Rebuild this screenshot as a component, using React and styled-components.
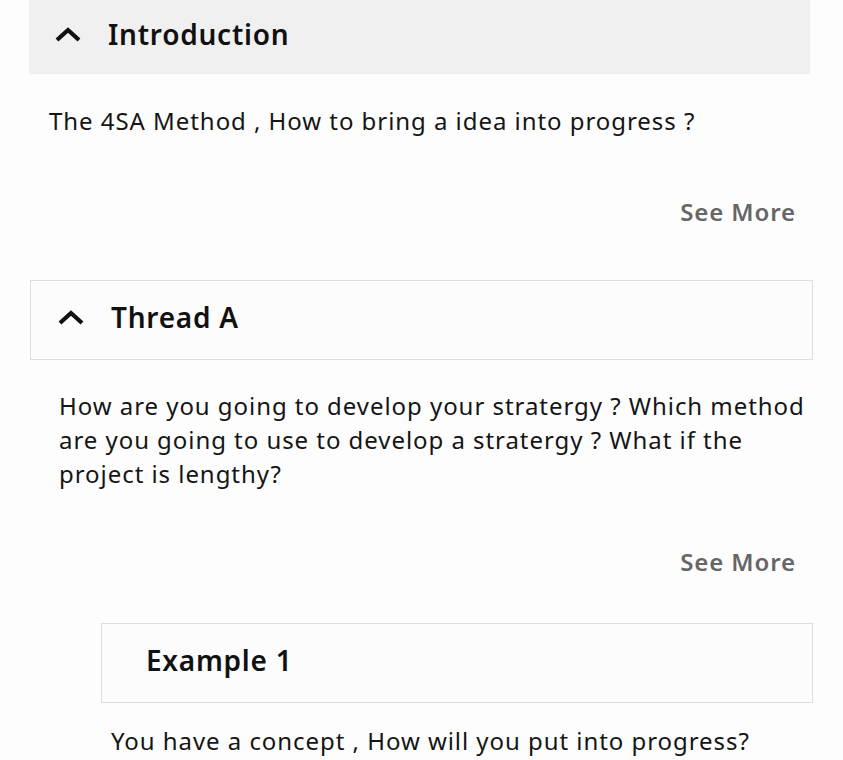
import styled, { createGlobalStyle } from "styled-components";

const GlobalStyle = createGlobalStyle`
  body {
    margin: 0;
    background: #fdfdfd;
    font-family: "Noto Sans", "Open Sans", sans-serif;
    color: #151515;
  }
`;

const Chevron = () => (
  <svg width="28" height="16" viewBox="0 0 28 16">
    <polyline points="3,14 14,4 25,14" fill="none" stroke="#111" strokeWidth="4.2" />
  </svg>
);

const App = () => {
  return (
    <>
      <GlobalStyle />
      <Page>
        <HeaderBar filled left="29px" right="33px">
          <Chevron />
          <HeaderText>Introduction</HeaderText>
        </HeaderBar>
        <Body left="49px" top="30px">
          The 4SA Method , How to bring a idea into progress ?
        </Body>
        <SeeMore top="57px">See More</SeeMore>

        <HeaderBar left="30px" right="30px" top="51px">
          <Chevron />
          <HeaderText>Thread A</HeaderText>
        </HeaderBar>
        <Body left="59px" top="29px">
          How are you going to develop your stratergy ? Which method are you going to use to
          develop a stratergy ? What if the project is lengthy?
        </Body>
        <SeeMore top="54px">See More</SeeMore>

        <HeaderBar left="101px" right="30px" top="44px" plain>
          <HeaderText>Example 1</HeaderText>
        </HeaderBar>
        <Body left="111px" top="21px">
          You have a concept , How will you put into progress?
        </Body>
      </Page>
    </>
  );
};

export default App;

const Page = styled.div`
  width: 843px;
  height: 760px;
  overflow: hidden;
  display: flex;
  flex-direction: column;
`;

const HeaderBar = styled.div`
  box-sizing: border-box;
  flex-shrink: 0;
  height: ${(p) => (p.filled ? "74px" : "80px")};
  margin: ${(p) => p.top || "0"} ${(p) => p.right} 0 ${(p) => p.left};
  background: ${(p) => (p.filled ? "#f0f0f0" : "#fcfcfc")};
  border: ${(p) => (p.filled ? "none" : "1.5px solid #dedede")};
  display: flex;
  align-items: center;
  gap: 26px;
  padding-left: ${(p) => (p.plain ? "44px" : p.filled ? "25px" : "26px")};
  padding-bottom: 6px;
`;

const HeaderText = styled.div`
  font-size: 28px;
  font-weight: 600;
  letter-spacing: 0.75px;
  color: #111;
`;

const Body = styled.div`
  margin: ${(p) => p.top} 30px 0 ${(p) => p.left};
  font-size: 24px;
  line-height: 34px;
  letter-spacing: 0.95px;
  color: #151515;
`;

const SeeMore = styled.div`
  margin-top: ${(p) => p.top};
  padding-right: 47px;
  text-align: right;
  font-size: 24px;
  line-height: 34px;
  font-weight: 600;
  letter-spacing: 0.9px;
  color: #666;
`;
